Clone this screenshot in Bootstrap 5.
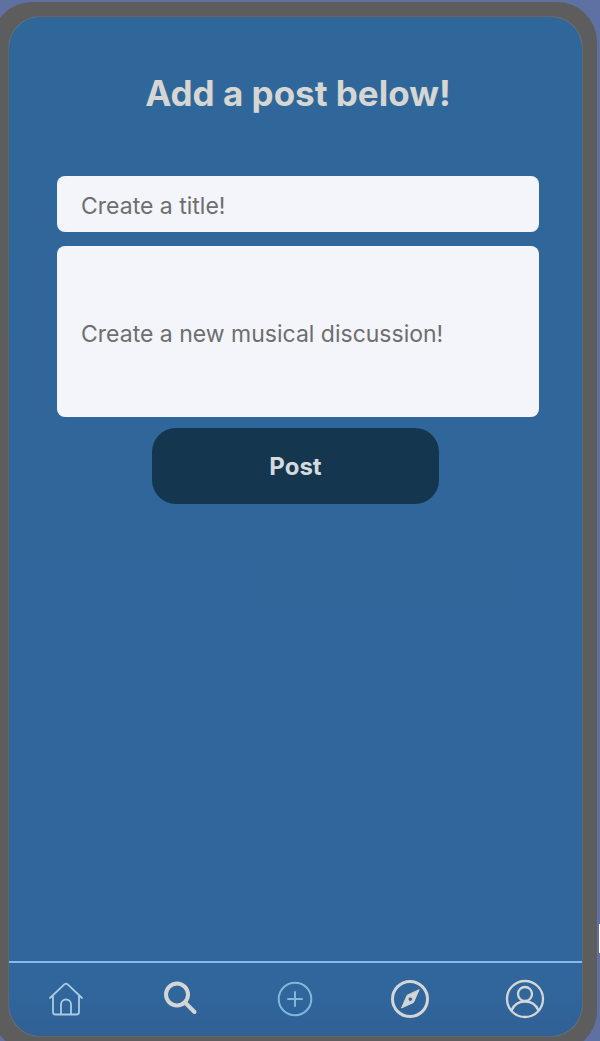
<!DOCTYPE html>
<html lang="en">
<head>
<meta charset="utf-8">
<meta name="viewport" content="width=device-width, initial-scale=1">
<title>Add a post</title>
<link href="https://cdn.jsdelivr.net/npm/bootstrap@5.3.0/dist/css/bootstrap.min.css" rel="stylesheet">
<style>
  body { background: #5f70a3; font-family: Inter, "Liberation Sans", sans-serif; overflow: hidden; }
  /* The phone is slightly larger than the window and bleeds off two edges */
  .phone { background: #5e5d5d; border-radius: 40px; padding: 15px 15px 15px 17px; margin: 2px 3px -10px -8px; }
  .screen { background: linear-gradient(#30679b, #30669b 96%, #306096); border-radius: 31px; overflow: hidden; box-shadow: 0 0 1px #b9c4c4; }
  .composer { padding: 55px 43px 0 48px; }
  .composer h1 { color: #d6d6d2; font-size: 35px; font-weight: 700; line-height: 42px; margin-bottom: 62px; }
  .post-field { background: #f4f5fa; border: 0; border-radius: 8px; color: #444; font-size: 23px; line-height: 32px; padding: 14px 24px 10px; resize: none; }
  .post-field::placeholder { color: #6d6e70; opacity: 1; }
  .post-title { height: 56px; margin-bottom: 14px; }
  .post-body { height: 171px; padding-top: 72px; margin-bottom: 11px; }
  .post-submit { background: #14374f; color: #d5dade; border: 0; border-radius: 24px; width: 50%; height: 76px; padding-top: 8px; font-size: 24px; font-weight: 700; }
  .post-submit:hover { background: #1b435f; color: #fff; }
  .tab-bar { border-top: 2px solid #86b9ec; height: 75px; padding-bottom: 2px; }
  .tab-bar a { color: #d3d5d6; }
  .tab-bar svg { display: block; fill: none; stroke: currentColor; stroke-linecap: round; stroke-linejoin: round; }
  .tab-bar .tab-home { color: #a9cce6; }
  .tab-bar .tab-add { color: #7db9dc; }
  .edge-tab { position: absolute; right: 0; top: 924px; width: 1px; height: 29px; background: #fff; }
</style>
</head>
<body class="d-flex flex-column min-vh-100 position-relative">
<div class="phone d-flex flex-column flex-grow-1">
  <div class="screen d-flex flex-column flex-grow-1">
    <main class="flex-grow-1">
      <form>
        <div class="composer">
          <h1 class="text-center">Add a post below!</h1>
          <input type="text" class="form-control post-field post-title" placeholder="Create a title!" aria-label="Title">
          <textarea class="form-control post-field post-body" placeholder="Create a new musical discussion!" aria-label="Discussion"></textarea>
        </div>
        <button type="button" class="btn post-submit d-block mx-auto">Post</button>
      </form>
    </main>
    <nav class="tab-bar row row-cols-5 g-0 align-items-stretch" aria-label="Main">
      <a href="#home" class="col tab-home d-flex align-items-center justify-content-center" aria-label="Home">
        <svg width="40" height="40" viewBox="0 0 40 40" stroke-width="1.8"><path d="M4 19 18.600 5.200Q20 4 21.400 5.200L36 19M7 16.500V33Q7 35.500 9.500 35.500H30.500Q33 35.500 33 33V16.500M15 35V25.500A5 5 0 0 1 25 25.500V35"/></svg>
      </a>
      <a href="#search" class="col d-flex align-items-center justify-content-center" aria-label="Search">
        <svg width="40" height="40" viewBox="0 0 40 40" stroke-width="4"><circle cx="16" cy="15.500" r="11"/><path d="m24 23.500 9.500 9.500"/></svg>
      </a>
      <a href="#add" class="col tab-add d-flex align-items-center justify-content-center" aria-label="Add">
        <svg width="40" height="40" viewBox="0 0 40 40" stroke-width="2"><circle cx="20" cy="20" r="16.300"/><path d="M20 13v14M13 20h14"/></svg>
      </a>
      <a href="#explore" class="col d-flex align-items-center justify-content-center" aria-label="Explore">
        <svg width="40" height="40" viewBox="0 0 40 40" stroke-width="3"><circle cx="20" cy="20" r="17.500"/><path fill="currentColor" fill-rule="evenodd" stroke-width="1" d="M29 11 23.500 23.500 11.500 29 17 16.500ZM20.300 17.800a2.300 2.300 0 1 0 0 4.600 2.300 2.300 0 1 0 0-4.600Z"/></svg>
      </a>
      <a href="#profile" class="col d-flex align-items-center justify-content-center" aria-label="Profile">
        <svg width="40" height="40" viewBox="0 0 40 40" stroke-width="2.300"><circle cx="20" cy="20" r="18"/><circle cx="20" cy="15" r="7"/><path d="M6.500 31.500C9 25.500 14 22.500 20 22.500S31 25.500 33.500 31.500"/></svg>
      </a>
    </nav>
  </div>
</div>
<div class="edge-tab"></div>
<script src="https://cdn.jsdelivr.net/npm/bootstrap@5.3.0/dist/js/bootstrap.bundle.min.js"></script>
</body>
</html>
